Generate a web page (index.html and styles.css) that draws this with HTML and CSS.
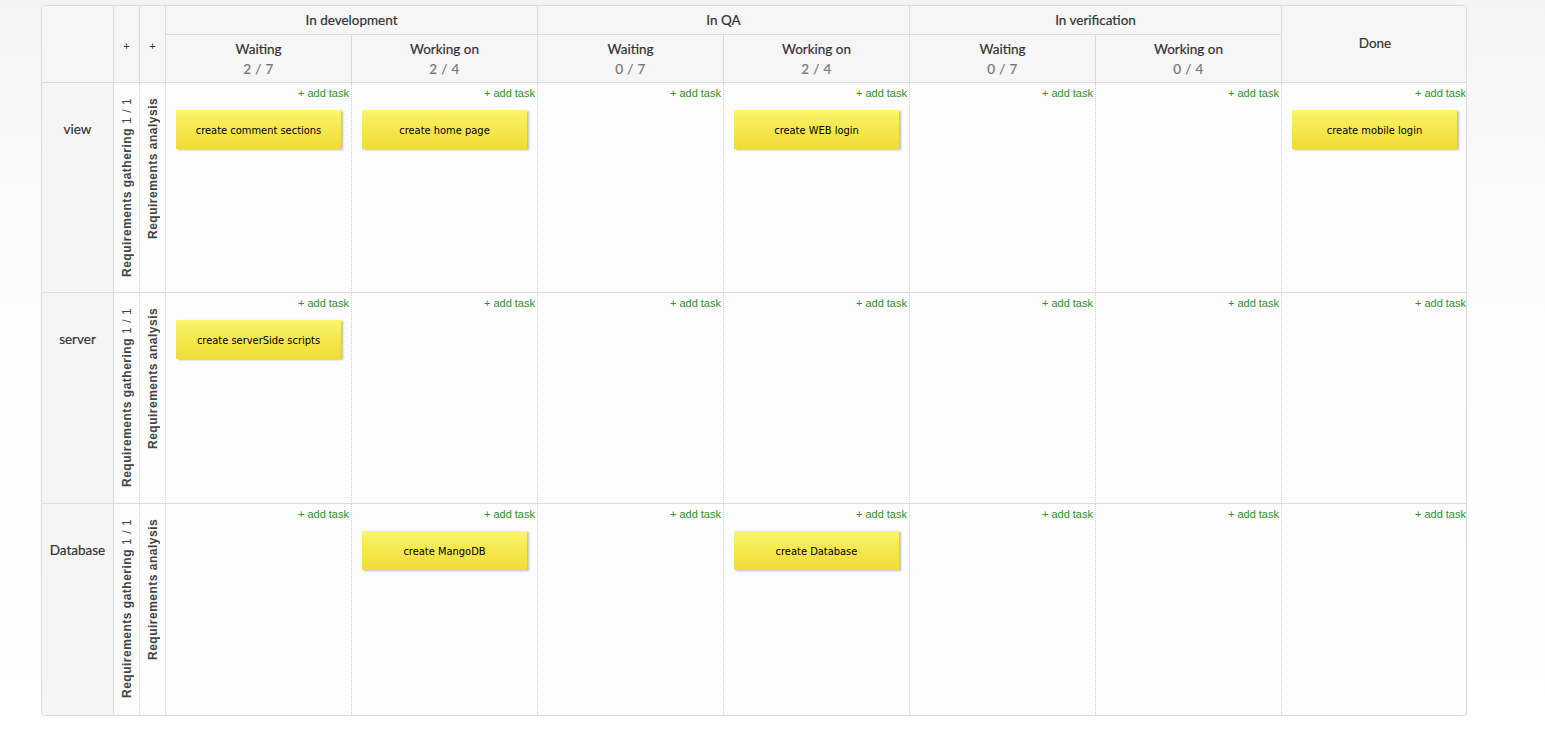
FILE: index.html
```html
<!DOCTYPE html>
<html>
<head>
<meta charset="utf-8">
<link rel="stylesheet" href="styles.css">
</head>
<body>
<div class="board">
  <div class="hcell corner"></div>
  <div class="hcell plus c2">+</div>
  <div class="hcell plus c3">+</div>
  <div class="hcell group g1">In development</div>
  <div class="hcell group g2">In QA</div>
  <div class="hcell group g3">In verification</div>
  <div class="hcell done">Done</div>
  <div class="hcell sub"><span class="sub-title">Waiting</span><span class="count">2 / 7</span></div>
  <div class="hcell sub"><span class="sub-title">Working on</span><span class="count">2 / 4</span></div>
  <div class="hcell sub"><span class="sub-title">Waiting</span><span class="count">0 / 7</span></div>
  <div class="hcell sub"><span class="sub-title">Working on</span><span class="count">2 / 4</span></div>
  <div class="hcell sub"><span class="sub-title">Waiting</span><span class="count">0 / 7</span></div>
  <div class="hcell sub"><span class="sub-title">Working on</span><span class="count">0 / 4</span></div>

  <!-- lane: view -->
  <div class="lane-name">view</div>
  <div class="swim"><span class="vtext">Requirements gathering <span class="vcount">1 / 1</span></span></div>
  <div class="swim"><span class="vtext">Requirements analysis</span></div>
  <div class="cell"><a class="add">+ add task</a><div class="card">create comment sections</div></div>
  <div class="cell"><a class="add">+ add task</a><div class="card">create home page</div></div>
  <div class="cell"><a class="add">+ add task</a></div>
  <div class="cell"><a class="add">+ add task</a><div class="card">create WEB login</div></div>
  <div class="cell"><a class="add">+ add task</a></div>
  <div class="cell"><a class="add">+ add task</a></div>
  <div class="cell last"><a class="add">+ add task</a><div class="card">create mobile login</div></div>

  <!-- lane: server -->
  <div class="lane-name">server</div>
  <div class="swim"><span class="vtext">Requirements gathering <span class="vcount">1 / 1</span></span></div>
  <div class="swim"><span class="vtext">Requirements analysis</span></div>
  <div class="cell"><a class="add">+ add task</a><div class="card">create serverSide scripts</div></div>
  <div class="cell"><a class="add">+ add task</a></div>
  <div class="cell"><a class="add">+ add task</a></div>
  <div class="cell"><a class="add">+ add task</a></div>
  <div class="cell"><a class="add">+ add task</a></div>
  <div class="cell"><a class="add">+ add task</a></div>
  <div class="cell last"><a class="add">+ add task</a></div>

  <!-- lane: Database -->
  <div class="lane-name lastrow">Database</div>
  <div class="swim lastrow"><span class="vtext">Requirements gathering <span class="vcount">1 / 1</span></span></div>
  <div class="swim lastrow"><span class="vtext">Requirements analysis</span></div>
  <div class="cell lastrow"><a class="add">+ add task</a></div>
  <div class="cell lastrow"><a class="add">+ add task</a><div class="card">create MangoDB</div></div>
  <div class="cell lastrow"><a class="add">+ add task</a></div>
  <div class="cell lastrow"><a class="add">+ add task</a><div class="card">create Database</div></div>
  <div class="cell lastrow"><a class="add">+ add task</a></div>
  <div class="cell lastrow"><a class="add">+ add task</a></div>
  <div class="cell lastrow last"><a class="add">+ add task</a></div>
</div>
</body>
</html>
```
FILE: styles.css
```css
html, body {
  margin: 0;
  padding: 0;
}
body {
  background: linear-gradient(#f4f4f4 0, #fbfbfb 200px, #ffffff 700px);
  min-height: 740px;
  padding: 5px 0 0 41px;
  box-sizing: border-box;
  font-family: "Lato", "Liberation Sans", sans-serif;
}
.board {
  display: grid;
  grid-template-columns: 72px 26px 26px repeat(7, 186px);
  grid-template-rows: 29px 48px 210px 211px 211px;
  width: 1426px;
  border: 1px solid #dcdcdc;
  border-radius: 4px;
  box-sizing: border-box;
  background: #fcfcfc;
  overflow: hidden;
  box-shadow: 0 0 2px rgba(0,0,0,0.04);
}
.hcell {
  background: #f6f6f6;
  border-right: 1px solid #dcdcdc;
  border-bottom: 1px solid #dcdcdc;
  color: #333;
  font-size: 13.5px;
  display: flex;
  align-items: center;
  justify-content: center;
  box-sizing: border-box;
  -webkit-text-stroke: 0.2px #333;
}
.corner { grid-column: 1; grid-row: 1 / 3; }
.plus { grid-row: 1 / 3; font-size: 11px; padding-top: 2px; -webkit-text-stroke: 0; }
.c2 { grid-column: 2; }
.c3 { grid-column: 3; }
.group { grid-row: 1; padding-bottom: 1px; }
.g1 { grid-column: 4 / 6; }
.g2 { grid-column: 6 / 8; }
.g3 { grid-column: 8 / 10; }
.done { grid-column: 10; grid-row: 1 / 3; border-right: none; padding-bottom: 2px; }
.sub {
  grid-row: 2;
  flex-direction: column;
  justify-content: flex-start;
  padding-top: 4px;
  line-height: 20px;
}
.count {
  color: #777;
  letter-spacing: 0.4px;
  -webkit-text-stroke: 0.2px #777;
}

.lane-name {
  background: #f5f5f5;
  border-right: 1px solid #dcdcdc;
  border-bottom: 1px solid #dcdcdc;
  color: #333;
  font-size: 13.5px;
  text-align: center;
  padding-top: 38px;
  box-sizing: border-box;
  -webkit-text-stroke: 0.2px #333;
}
.swim {
  border-right: 1px dotted #d0d0d0;
  border-bottom: 1px solid #dcdcdc;
  box-sizing: border-box;
  display: flex;
  justify-content: center;
  padding: 15px 0 6px 0;
}
.vtext {
  writing-mode: vertical-rl;
  transform: rotate(180deg);
  font-family: "Liberation Sans", Arial, sans-serif;
  font-weight: bold;
  font-size: 12px;
  letter-spacing: 0.5px;
  color: #444;
  text-align: end;
  white-space: nowrap;
}
.vcount {
  font-weight: normal;
  margin-left: 4px;
  letter-spacing: 0.6px;
}
.cell {
  border-right: 1px dotted #d0d0d0;
  border-bottom: 1px solid #dcdcdc;
  box-sizing: border-box;
  display: flex;
  flex-direction: column;
  padding: 4px 2px 0 10px;
}
.cell.last { border-right: none; padding-right: 2px; }
.lastrow { border-bottom: none; }
.add {
  align-self: flex-end;
  font-family: "Liberation Sans", Arial, sans-serif;
  font-size: 11px;
  color: #2f8f2f;
  line-height: 13px;
  cursor: pointer;
}
.card {
  margin-top: 10px;
  width: 165px;
  height: 39px;
  padding-top: 2px;
  box-sizing: border-box;
  background: linear-gradient(#fbf66c 0, #f8f060 20%, #f4e548 60%, #f1dc38 100%);
  box-shadow: 2px 1px 2px rgba(0,0,0,0.25);
  font-family: "DejaVu Sans Condensed", "DejaVu Sans", sans-serif;
  font-stretch: condensed;
  font-size: 11px;
  color: #000;
  display: flex;
  align-items: center;
  justify-content: center;
}
```
